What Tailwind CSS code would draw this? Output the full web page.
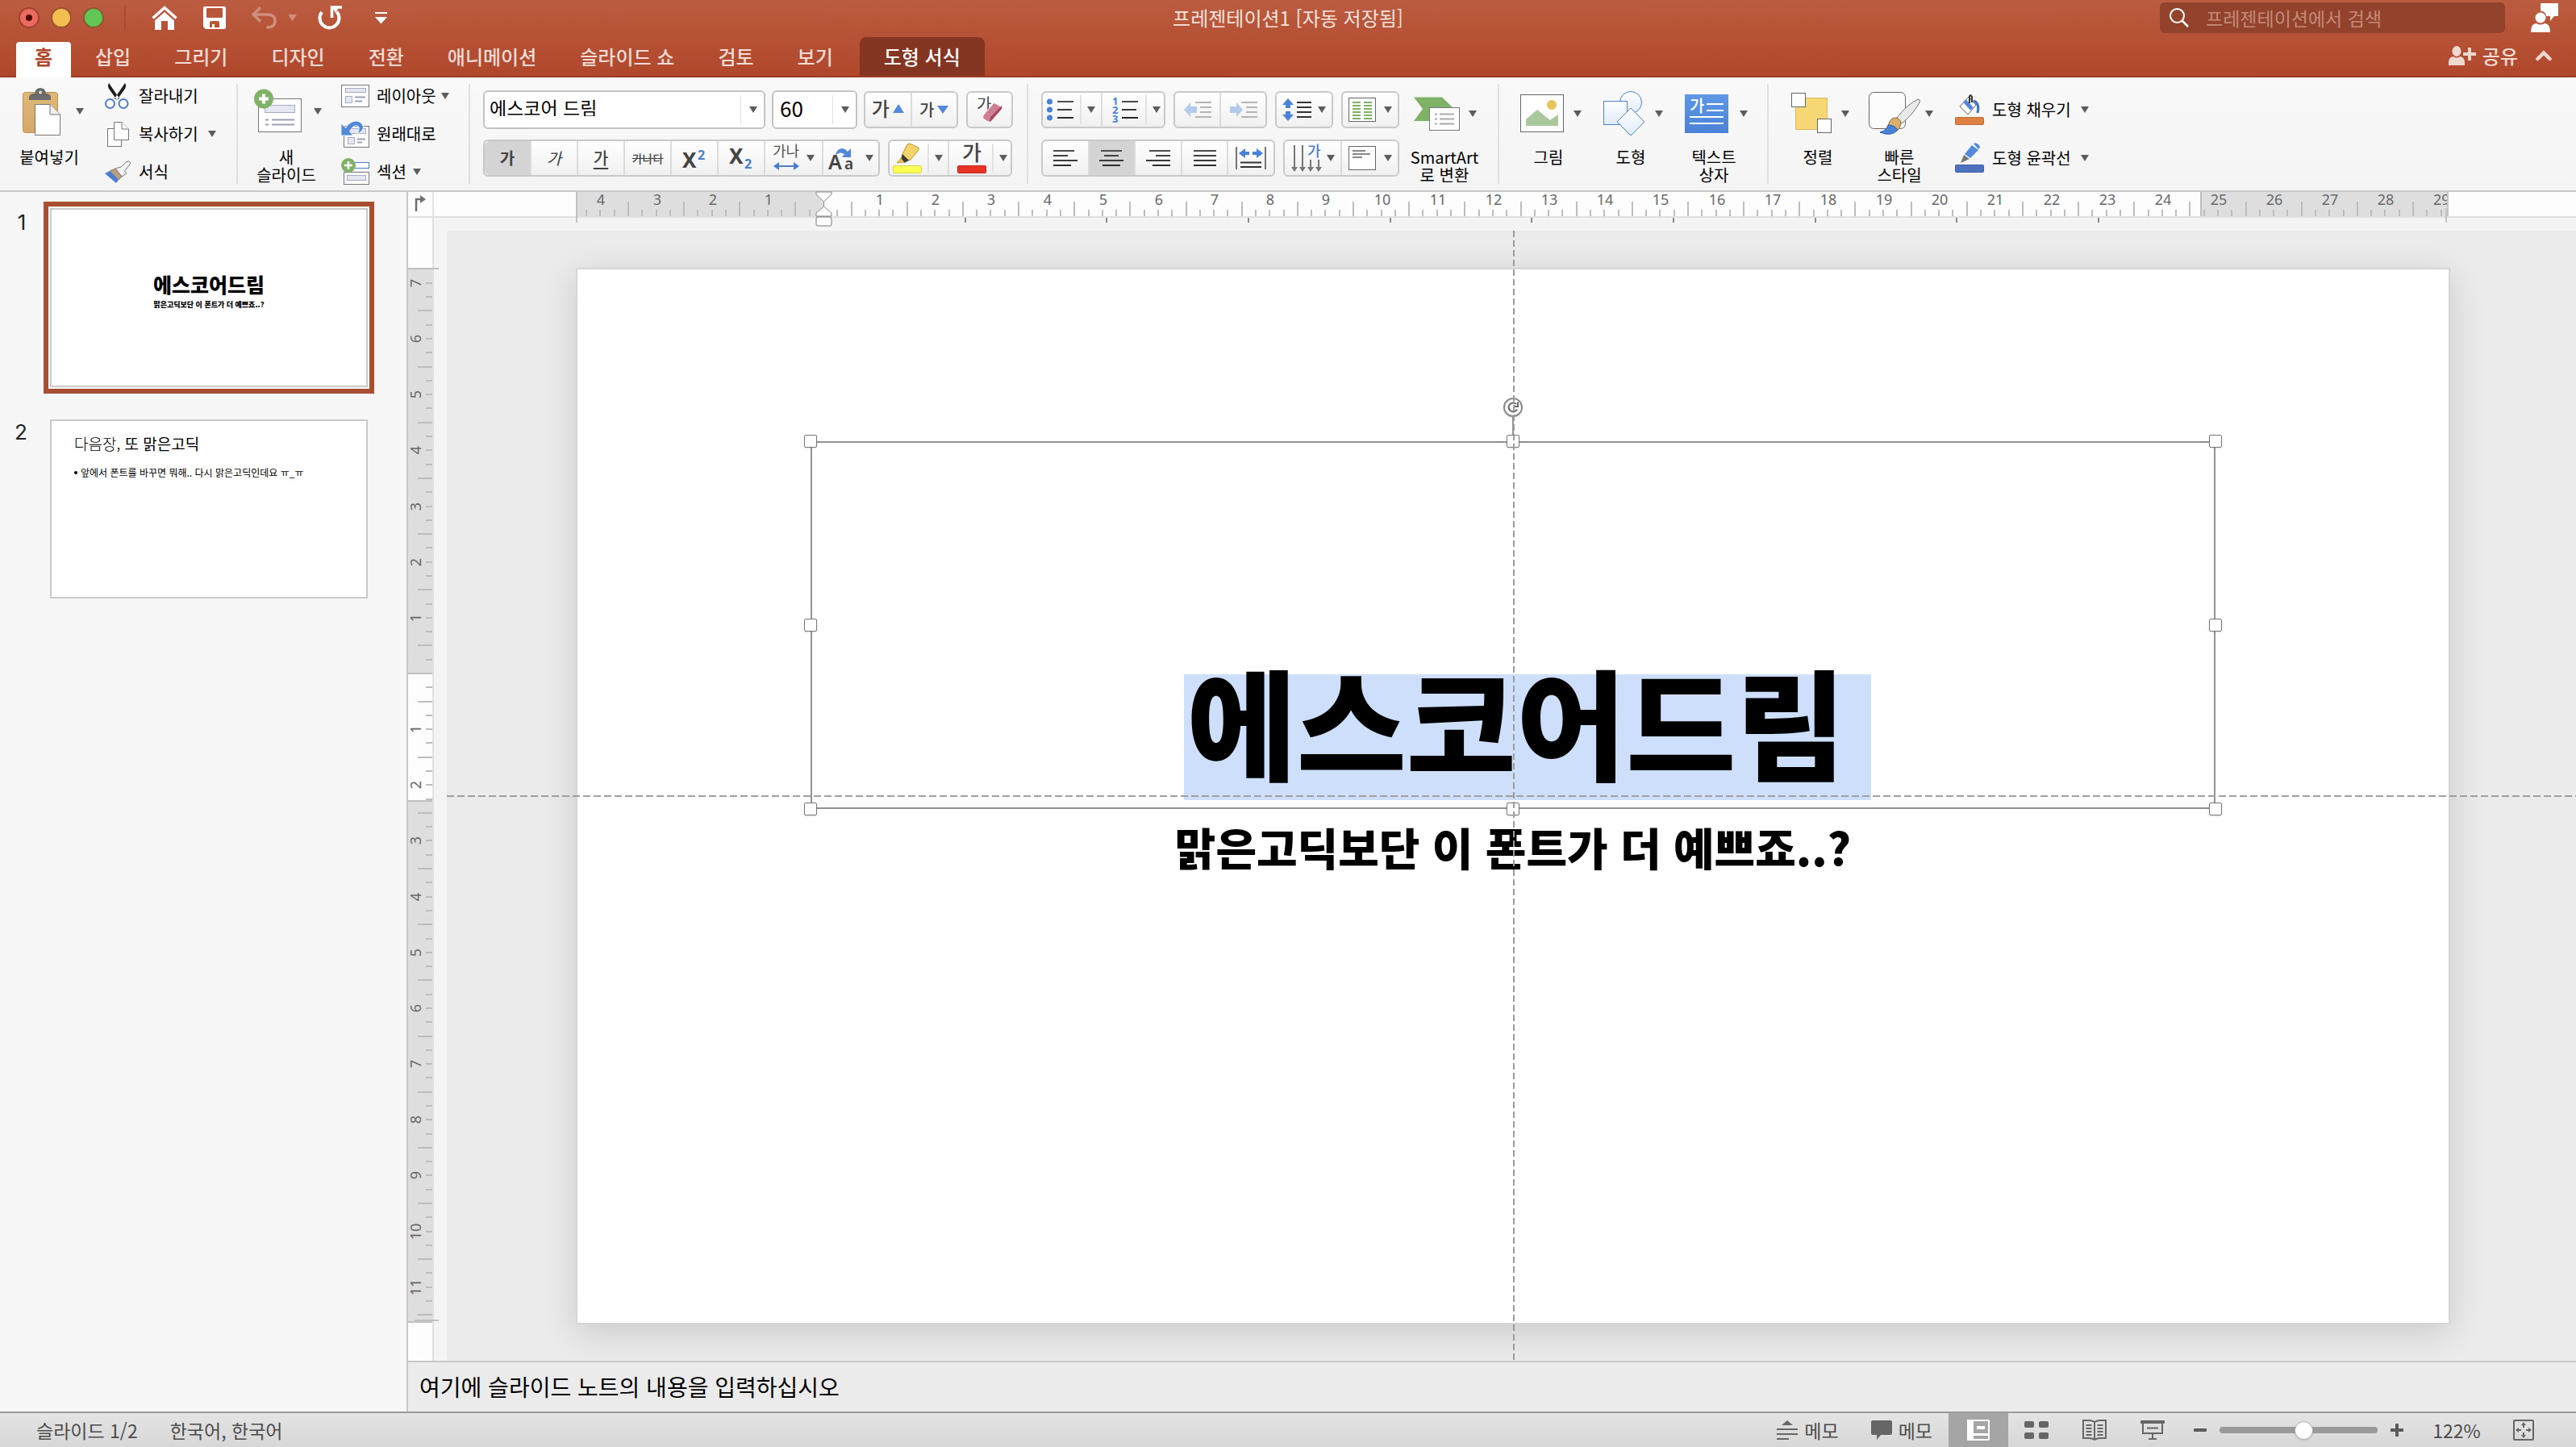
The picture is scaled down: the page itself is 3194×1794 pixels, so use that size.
<!DOCTYPE html>
<html lang="ko">
<head>
<meta charset="utf-8">
<title>프레젠테이션1 [자동 저장됨]</title>
<script src="https://cdn.jsdelivr.net/npm/@tailwindcss/browser@4"></script>
</head>
<body class="h-screen overflow-hidden flex flex-col bg-[#f4f4f4] text-black font-['Noto_Sans_CJK_KR',sans-serif] text-[20px] leading-[22px]">
<svg class="absolute size-0">
  <symbol id="caret" viewBox="0 0 10 8"><path d="M0 0H10L5 8Z" fill="#5c5c5c"/></symbol>
  <linearGradient id="gBlue" x1="0" y1="0" x2="0" y2="1"><stop offset="0" stop-color="#5f97e6"/><stop offset="1" stop-color="#4a82d8"/></linearGradient>
  <linearGradient id="gPale" x1="0" y1="0" x2="0" y2="1"><stop offset="0" stop-color="#fff"/><stop offset="1" stop-color="#e0ebfa"/></linearGradient>
  <linearGradient id="gTan" x1="0" y1="0" x2="0" y2="1"><stop offset="0" stop-color="#dfb878"/><stop offset="1" stop-color="#d3a869"/></linearGradient>
  <linearGradient id="gLine" gradientUnits="userSpaceOnUse" x1="0" y1="0" x2="0" y2="30"><stop offset="0" stop-color="#555"/><stop offset="1" stop-color="#222"/></linearGradient>
</svg>

<!-- Title bar and tabs -->
<header class="shrink-0 h-24 flex flex-col bg-linear-to-b from-[#bb5c40] to-[#b0472b] border-b-2 border-[#9a3c23]">
  <div class="grid grid-cols-[1fr_auto_1fr] items-center h-11">
    <div class="flex items-center h-11">
      <div class="flex gap-[14px] pl-[23px]">
        <button aria-label="닫기" class="size-[26px] rounded-full bg-[#ec6a5f] border-2 border-[#9f4230] flex items-center justify-center"><span class="size-2 rounded-full bg-[#4d0a04]"></span></button>
        <button aria-label="최소화" class="size-[26px] rounded-full bg-[#f4bf50] border-2 border-[#9f5330]"></button>
        <button aria-label="확대" class="size-[26px] rounded-full bg-[#61c654] border-2 border-[#8a5a30]"></button>
      </div>
      <div class="w-[2px] h-8 bg-[#a54c33] ml-[25px]"></div>
      <button aria-label="홈" class="ml-8"><svg width="32" height="30" viewBox="0 0 32 30"><path d="M1.500 15.500L16 2.500L30.500 15.500" fill="none" stroke="#fff" stroke-width="3.500"/><path d="M16 8L28 18.500V30H20V19H12V30H4V18.500Z" fill="#fff"/></svg></button>
      <button aria-label="저장" class="ml-8"><svg width="28" height="28" viewBox="0 0 28 28"><path d="M0 2Q0 0 2 0H26Q28 0 28 2V26Q28 28 26 28H3L0 25Z" fill="#fff"/><rect x="4" y="2" width="20" height="12" rx="1" fill="#b8563a"/><path d="M8 20Q8 18 10 18H18Q20 18 20 20V26H14V22H11V26H8Z" fill="#b8563a"/></svg></button>
      <button aria-label="실행 취소" class="ml-8 flex items-center gap-[14px]"><svg width="31" height="28" viewBox="0 0 31 28"><path d="M11 1.500L2 10L11 18.500M3 10H20Q29 10 29 18Q29 26 18.500 26" fill="none" stroke="#d08f7c" stroke-width="3.500"/></svg><svg width="11" height="8" viewBox="0 0 11 8"><path d="M0 0H11L5.500 8Z" fill="#d08f7c"/></svg></button>
      <button aria-label="다시 실행" class="ml-[26px]"><svg width="31" height="30" viewBox="0 0 31 30"><path d="M5 8A12 12 0 1 0 23.500 7.500" fill="none" stroke="#fff" stroke-width="4"/><path d="M17.500 15V2H30" fill="none" stroke="#fff" stroke-width="3.500"/><path d="M17 1H27L22 9Z" fill="#fff"/></svg></button>
      <button aria-label="도구 모음 사용자 지정" class="ml-10"><svg width="15" height="15" viewBox="0 0 15 15"><rect width="15" height="2" fill="#fff"/><path d="M0 6H15L7.500 14.500Z" fill="#fff"/></svg></button>
    </div>
    <div class="text-[24px] leading-8 text-[#f5e3de]">프레젠테이션1 [자동 저장됨]</div>
    <div class="flex justify-end items-center pr-[22px] gap-8">
      <label class="flex items-center w-[428px] h-[38px] rounded-md bg-[#93432c] pl-3 gap-[21px]">
        <svg width="24" height="24" viewBox="0 0 24 24" fill="none" stroke="#fff" stroke-width="2"><circle cx="9.500" cy="9.500" r="8.500"/><path d="M15.500 15.500L23 23" stroke-width="2.500"/></svg>
        <input type="text" aria-label="검색" placeholder="프레젠테이션에서 검색" class="flex-1 min-w-0 bg-transparent outline-none text-[23px] text-white placeholder:text-[#c48a79]">
      </label>
      <button aria-label="피드백"><svg width="34" height="36" viewBox="0 0 34 36" fill="#fff"><path d="M13 0H33Q34 0 34 1V15Q34 16 33 16H29L24 22V16H19Q18.500 10 12 9.500V1Q12 0 13 0Z"/><ellipse cx="12" cy="18" rx="6.500" ry="6.500"/><path d="M0 36Q0 25 7 25Q12 28 17 25Q24 25 24 36Z"/></svg></button>
    </div>
  </div>
  <div class="flex-1 flex justify-between">
    <nav class="flex items-end text-[24px] leading-8 text-[#f3dcd5]">
      <button class="ml-5 mr-[3px] h-[44px] -mb-[2px] pb-2 self-end w-[68px] rounded-t bg-white text-[#b0472b] font-bold">홈</button>
      <button class="h-12 px-[27px] font-medium">삽입</button>
      <button class="h-12 px-[27px] font-medium">그리기</button>
      <button class="h-12 px-[27px] font-medium">디자인</button>
      <button class="h-12 px-[27px] font-medium">전환</button>
      <button class="h-12 px-[27px] font-medium">애니메이션</button>
      <button class="h-12 px-[27px] font-medium">슬라이드 쇼</button>
      <button class="h-12 px-[27px] font-medium">검토</button>
      <button class="h-12 px-[27px] font-medium">보기</button>
      <button class="ml-[6px] h-12 px-[30px] rounded-t-lg bg-[#853622] text-white font-medium">도형 서식</button>
    </nav>
    <div class="flex items-center pr-[30px] text-[24px] text-[#f3dcd5] font-medium">
      <button class="flex items-center gap-2"><svg width="34" height="24" viewBox="0 0 34 24" fill="#efd8d0"><ellipse cx="10" cy="6.500" rx="5.500" ry="6.500"/><path d="M0 24V20Q0 14 6 13Q10 16 14 13Q20 14 20 20V24Z"/><path d="M24 2H28V8H34V12H28V18H24V12H18V8H24Z"/></svg>공유</button>
      <button aria-label="리본 축소" class="ml-[22px]"><svg width="20" height="14" viewBox="0 0 20 14" fill="none" stroke="#efd8d0" stroke-width="4.500" stroke-linecap="round"><path d="M2.500 11L10 3.500L17.500 11"/></svg></button>
    </div>
  </div>
</header>

<!-- Ribbon -->
<div class="shrink-0 h-[142px] flex bg-linear-to-b from-[#f9f9f9] to-[#f4f4f4] border-b-2 border-[#c8c8c8]">
  <!-- Clipboard -->
  <div class="flex w-[293px] pl-6">
    <button class="flex flex-col w-[84px] mr-[22px] pt-3">
      <span class="flex items-center h-[60px] pl-1 gap-[18px]">
        <svg width="48" height="60" viewBox="0 0 48 60"><rect x=".5" y="6.500" width="43" height="50" rx="3" fill="url(#gTan)" stroke="#bf924f"/><path d="M8 13Q8 9 13 8H15Q16 1 22 1Q28 1 29 8H31Q35 9 35 13V16H8Z" fill="#6b6b6b"/><circle cx="22" cy="6.500" r="2" fill="#e8dcc8"/><path d="M15.500 21.500H34L46.500 34V59.500H15.500Z" fill="#fff" stroke="#777"/><path d="M34 21.500V34H46.500" fill="#f0f0f0" stroke="#777"/></svg>
        <svg width="10" height="8"><use href="#caret"/></svg>
      </span>
      <span class="pt-4 w-[74px]">붙여넣기</span>
    </button>
    <div class="flex flex-col flex-1">
      <button class="flex flex-1 items-center"><span class="w-[42px]"><svg width="30" height="32" viewBox="0 0 30 32"><path d="M5 0L18 19L15 21L5 7Q3 3 5 0ZM25 0L12 19L15 21L25 7Q27 3 25 0Z" fill="#1d1d1d"/><circle cx="6.500" cy="25.500" r="5.500" fill="#fff" stroke="#4a7fd0" stroke-width="2"/><circle cx="23" cy="25.500" r="5.500" fill="#fff" stroke="#4a7fd0" stroke-width="2"/></svg></span>잘라내기</button>
      <button class="flex flex-1 items-center"><span class="w-[42px] pl-[3px]"><svg width="27" height="31" viewBox="0 0 27 31" fill="#fff" stroke="#777"><rect x=".5" y="8.500" width="17" height="22"/><path d="M8.500 .5H18L26.500 9V22.500H8.500Z"/><path d="M18 .5V9H26.500"/></svg></span>복사하기<svg class="ml-3" width="10" height="8"><use href="#caret"/></svg></button>
      <button class="flex flex-1 items-center"><span class="w-[42px]"><svg width="32" height="28" viewBox="0 0 32 28"><path d="M20 8L27 1.500Q30 0 31.500 2Q32 4 30 6L24.500 13L27 16L21 20L13 10Z" fill="#f2f2f2" stroke="#777"/><path d="M13 10L21 20L17 24L6 13Z" fill="#b79f84" stroke="#7c6a55" stroke-width=".8"/><path d="M6 13L17 24L14 28L0 16Z" fill="#4a7fd0"/></svg></span>서식</button>
    </div>
  </div>
  <div class="w-[2px] my-2 bg-[#e0e0e0]"></div>
  <!-- Slides -->
  <div class="flex w-[286px] pl-5">
    <button class="flex flex-col w-[92px] mr-4 pt-3">
      <span class="flex items-center h-[60px] gap-[14px]">
        <svg width="60" height="56" viewBox="0 0 60 56"><rect x="5.500" y="12.500" width="53" height="41" fill="#fff" stroke="#777"/><rect x="13.500" y="20.500" width="37" height="9" fill="#e4e7ef" stroke="#a7adbd"/><path d="M14 38.500H18M22 38.500H50M14 44.500H18M22 44.500H50" stroke="#9aa1b3" stroke-width="2"/><circle cx="12" cy="12.500" r="12" fill="#7fb267"/><path d="M12 6.500V18.500M6 12.500H18" stroke="#fff" stroke-width="4"/></svg>
        <svg width="10" height="8"><use href="#caret"/></svg>
      </span>
      <span class="w-20 pt-4">새<br>슬라이드</span>
    </button>
    <div class="flex flex-col flex-1">
      <button class="flex flex-1 items-center"><span class="w-11"><svg width="35" height="28" viewBox="0 0 35 28" fill="#fff" stroke="#777"><rect x=".5" y=".5" width="34" height="27"/><rect x="5.500" y="4.500" width="25" height="5" fill="#e4e7ef" stroke="#a7adbd"/><rect x="5.500" y="14.500" width="8" height="8" fill="#e4e7ef" stroke="#a7adbd"/><path d="M17 15.500H30M17 20.500H26" stroke="#9aa1b3" stroke-width="2"/></svg></span>레이아웃<svg class="ml-[6px]" width="10" height="8"><use href="#caret"/></svg></button>
      <button class="flex flex-1 items-center"><span class="w-11"><svg width="35" height="33" viewBox="0 0 35 33"><rect x="3.500" y="6.500" width="31" height="26" fill="#fff" stroke="#777"/><rect x="8.500" y="9.500" width="22" height="6" fill="#e4e7ef" stroke="#a7adbd"/><rect x="8.500" y="20.500" width="8" height="8" fill="#e4e7ef" stroke="#a7adbd"/><path d="M20 22.500H30M20 26.500H26" stroke="#9aa1b3" stroke-width="2"/><path d="M0 3V18H15L10.500 13Q14 6 19 5.500Q25 7 20 16Q28 12 27.500 7Q25 0 18 0Q10 1 5.500 8.500Z" fill="#5289db" stroke="#fff" stroke-width=".8"/></svg></span>원래대로</button>
      <button class="flex flex-1 items-center"><span class="w-11"><svg width="35" height="33" viewBox="0 0 35 33"><rect x="16.500" y="5.500" width="18" height="7" fill="#fff" stroke="#4a7fd0"/><rect x="3.500" y="17.500" width="31" height="15" fill="#fff" stroke="#777"/><rect x="7.500" y="21.500" width="23" height="6" fill="#e4e7ef" stroke="#a7adbd"/><circle cx="9" cy="9" r="9" fill="#7fb267"/><path d="M9 4V14M4 9H14" stroke="#fff" stroke-width="2.500"/></svg></span>섹션<svg class="ml-2" width="10" height="8"><use href="#caret"/></svg></button>
    </div>
  </div>
  <div class="w-[2px] my-2 bg-[#e0e0e0]"></div>
  <!-- Font -->
  <div class="flex flex-col w-[690px] pl-4 pt-4 gap-3 shrink-0">
    <div class="flex items-center h-12">
      <span class="relative w-[350px] h-12 rounded-md border-2 border-[#c4c4c4] bg-white">
        <select aria-label="글꼴" class="appearance-none w-full h-full pl-[6px] pb-[6px] bg-transparent text-[23px]"><option>에스코어 드림</option></select>
        <span class="absolute right-7 inset-y-1 w-px bg-[#e2e2e2]"></span><svg class="absolute right-2 top-[18px] pointer-events-none" width="10" height="8"><use href="#caret"/></svg>
      </span>
      <span class="relative w-[106px] h-12 ml-2 rounded-md border-2 border-[#c4c4c4] bg-white">
        <select aria-label="글꼴 크기" class="appearance-none w-full h-full pl-2 pb-1 bg-transparent text-[26px]"><option>60</option></select>
        <span class="absolute right-7 inset-y-1 w-px bg-[#e2e2e2]"></span><svg class="absolute right-2 top-[18px] pointer-events-none" width="10" height="8"><use href="#caret"/></svg>
      </span>
      <span class="flex w-[117px] h-[46px] ml-2 rounded-md border-2 border-[#c9c9c9] bg-linear-to-b from-white to-[#f0f0f0] divide-x-2 divide-[#dcdcdc] text-[#444]">
        <button class="flex-1 flex items-center justify-center gap-1 pb-1 text-[24px] font-medium">가<svg width="14" height="11"><path d="M7 0L14 11H0Z" fill="#5289db"/></svg></button>
        <button class="flex-1 flex items-center justify-center gap-1 pb-px text-[20px] font-medium">가<svg width="14" height="10"><path d="M0 0H14L7 10Z" fill="#5289db"/></svg></button>
      </span>
      <button aria-label="모든 서식 지우기" class="flex justify-center items-center w-[58px] h-[46px] ml-[10px] rounded-md border-2 border-[#c9c9c9] bg-linear-to-b from-white to-[#f0f0f0] text-[#444]"><svg class="overflow-visible" width="32" height="34" viewBox="0 0 32 34"><text x="0" y="18" font-size="20" fill="#444">가</text><path d="M8 24L20 10Q21 8 23 9L30 13Q31 14 30 16L18 31Q16 33 14 32L8 28Q7 26 8 24Z" fill="#cf7f95" stroke="#fff" stroke-width="1"/><path d="M16 32L17 26L31 12V16L18 31Z" fill="#a8465f"/></svg></button>
    </div>
    <div class="flex items-center h-12">
      <span class="flex w-[492px] h-[46px] rounded-md border-2 border-[#c9c9c9] bg-linear-to-b from-white to-[#f0f0f0] divide-x-2 divide-[#dcdcdc] text-[#444]">
        <button class="w-[58px] rounded-l-md bg-[#d4d4d4] font-bold">가</button>
        <button class="w-[58px] italic">가</button>
        <button class="w-[58px]"><span class="underline underline-offset-4 decoration-2 font-medium">가</span></button>
        <button class="w-[58px] text-[14px] line-through font-medium">가나다</button>
        <button aria-label="위 첨자" class="w-[58px]"><svg width="54" height="42" viewBox="0 0 54 42" class="overflow-visible font-['Noto_Sans',sans-serif] font-bold"><text x="13" y="33" font-size="26" fill="#444">X</text><text x="32" y="23" font-size="16" fill="#4a7fd0">2</text></svg></button>
        <button aria-label="아래 첨자" class="w-[58px]"><svg width="54" height="42" viewBox="0 0 54 42" class="overflow-visible font-['Noto_Sans',sans-serif] font-bold"><text x="13" y="28" font-size="26" fill="#444">X</text><text x="32" y="34" font-size="16" fill="#4a7fd0">2</text></svg></button>
        <button aria-label="문자 간격" class="w-[72px] flex items-center justify-center gap-2"><svg class="overflow-visible" width="34" height="40" viewBox="0 0 34 40"><text x="0" y="18" font-size="18" fill="#555">가나</text><path d="M6 30H28" stroke="#4a7fd0" stroke-width="2"/><path d="M1 30L8 25V35ZM33 30L26 25V35Z" fill="#4a7fd0"/></svg><svg width="10" height="8"><use href="#caret"/></svg></button>
        <button aria-label="대/소문자 바꾸기" class="flex-1 flex items-center justify-center gap-3"><svg width="34" height="40" viewBox="0 0 34 40" class="overflow-visible font-['Noto_Sans',sans-serif] font-semibold"><text x="0" y="34" font-size="25" fill="#444">A</text><text x="20" y="34" font-size="19" fill="#444">a</text><path d="M9 17Q10 8 18 8Q22 9 24 12L28 8V19H17L20 15Q14 11 9 17Z" fill="#5289db"/></svg><svg width="10" height="8"><use href="#caret"/></svg></button>
      </span>
      <span class="flex w-[154px] h-[46px] ml-[10px] rounded-md border-2 border-[#c9c9c9] bg-linear-to-b from-white to-[#f0f0f0] divide-x-2 divide-[#dcdcdc]">
        <button aria-label="텍스트 강조 색" class="w-[74px] flex items-center gap-[7px] pl-1"><svg width="36" height="38" viewBox="0 0 36 38"><path d="M18 2L21 1L32 6V9L21 22L11 16Z" fill="#f5d36b" stroke="#b59130"/><path d="M12 14L20 22L14 25L10 20Z" fill="#3a3a3a"/><path d="M10 19L14 24L5 25Z" fill="#f0c24f" stroke="#b59130" stroke-width=".8"/><rect x=".5" y="28.500" width="35" height="9" rx="1" fill="#fdfd54" stroke="#d8d84a"/></svg><span class="w-[2px] h-9 bg-[#e2e2e2]"></span><svg width="10" height="8"><use href="#caret"/></svg></button>
        <button aria-label="글꼴 색" class="flex-1 flex items-center gap-[7px] pl-[10px]"><svg class="overflow-visible" width="36" height="38" viewBox="0 0 36 38"><text x="6" y="22" font-size="26" font-weight="500" fill="#444">가</text><rect x=".5" y="28.500" width="35" height="9" rx="1" fill="#e93323" stroke="#b8281b"/></svg><span class="w-[2px] h-9 bg-[#e2e2e2]"></span><svg width="10" height="8"><use href="#caret"/></svg></button>
      </span>
    </div>
  </div>
  <div class="w-[2px] my-2 bg-[#e0e0e0]"></div>
  <!-- Paragraph -->
  <div class="flex w-[582px] pl-4 shrink-0">
    <div class="flex flex-col w-[444px] pt-4 gap-3">
      <div class="flex items-center h-12 gap-[10px]">
        <span class="flex w-[154px] h-[46px] rounded-md border-2 border-[#c9c9c9] bg-linear-to-b from-white to-[#f0f0f0] divide-x-2 divide-[#dcdcdc]">
          <button aria-label="글머리 기호" class="w-[74px] flex items-center pl-[5px] gap-[7px]"><svg width="34" height="28" viewBox="0 0 34 28"><g fill="#4a82d8"><circle cx="3.500" cy="4" r="3.500"/><circle cx="3.500" cy="14" r="3.500"/><circle cx="3.500" cy="24" r="3.500"/></g><path d="M13 4H33M13 14H31M13 24H33" stroke="url(#gLine)" stroke-width="2"/></svg><span class="w-[2px] h-9 bg-[#e2e2e2]"></span><svg width="10" height="8"><use href="#caret"/></svg></button>
          <button aria-label="번호 매기기" class="flex-1 flex items-center pl-3 gap-[7px]"><svg width="34" height="34" viewBox="0 0 34 34" class="overflow-visible font-['Noto_Sans',sans-serif] font-bold"><g fill="#4a82d8" font-size="13"><text x="0" y="11">1</text><text x="0" y="22">2</text><text x="0" y="33">3</text></g><path d="M12 7H32M12 17H30M12 27H32" stroke="url(#gLine)" stroke-width="2"/></svg><span class="w-[2px] h-9 bg-[#e2e2e2]"></span><svg width="10" height="8"><use href="#caret"/></svg></button>
        </span>
        <span class="flex w-[116px] h-[46px] rounded-md border-2 border-[#c9c9c9] bg-linear-to-b from-white to-[#f0f0f0] divide-x-2 divide-[#dcdcdc]">
          <button aria-label="내어쓰기" class="flex-1 flex items-center justify-center"><svg width="34" height="22" viewBox="0 0 34 22"><path d="M0 11L8 2V7H16V15H8V20Z" fill="#b5cbed"/><path d="M14 2H34M20 8H34M20 14H34M14 20H34" stroke="#b5b5b5" stroke-width="2"/></svg></button>
          <button aria-label="들여쓰기" class="flex-1 flex items-center justify-center"><svg width="34" height="22" viewBox="0 0 34 22"><path d="M16 11L8 2V7H0V15H8V20Z" fill="#b5cbed"/><path d="M14 2H34M20 8H34M20 14H34M14 20H34" stroke="#b5b5b5" stroke-width="2"/></svg></button>
        </span>
        <button aria-label="줄 간격" class="flex items-center justify-center gap-2 w-[72px] h-[46px] rounded-md border-2 border-[#c9c9c9] bg-linear-to-b from-white to-[#f0f0f0]"><svg width="36" height="28" viewBox="0 0 36 28"><path d="M7 0L14 8H10V12H4V8H0ZM7 28L14 20H10V16H4V20H0Z" fill="#4a82d8"/><path d="M18 5H36M18 11H36M18 17H36M18 23H36" stroke="#333" stroke-width="2"/></svg><svg width="10" height="8"><use href="#caret"/></svg></button>
        <button aria-label="열" class="flex items-center justify-center gap-[10px] w-[72px] h-[46px] rounded-md border-2 border-[#c9c9c9] bg-linear-to-b from-white to-[#f0f0f0]"><svg width="34" height="30" viewBox="0 0 34 30"><rect x=".5" y=".5" width="33" height="29" fill="#fff" stroke="#666"/><path d="M5 6H15M5 10H15M5 14H15M5 18H15M5 22H15M5 26H15M19 6H29M19 10H29M19 14H29M19 18H29M19 22H29M19 26H29" stroke="#7fb267" stroke-width="2"/></svg><svg width="10" height="8"><use href="#caret"/></svg></button>
      </div>
      <div class="flex items-center h-12 gap-[10px]">
        <span class="flex w-[290px] h-[46px] rounded-md border-2 border-[#c9c9c9] bg-linear-to-b from-white to-[#f0f0f0] divide-x-2 divide-[#dcdcdc]">
          <button aria-label="왼쪽 맞춤" class="flex-1 flex items-center justify-center"><svg width="30" height="28"><path d="M0 5H26M0 11H18M0 17H30M0 23H22" stroke="url(#gLine)" stroke-width="2"/></svg></button>
          <button aria-label="가운데 맞춤" class="flex-1 flex items-center justify-center bg-[#d4d4d4]"><svg width="30" height="28"><path d="M2 5H28M6 11H24M0 17H30M4 23H26" stroke="url(#gLine)" stroke-width="2"/></svg></button>
          <button aria-label="오른쪽 맞춤" class="flex-1 flex items-center justify-center"><svg width="30" height="28"><path d="M4 5H30M12 11H30M0 17H30M8 23H30" stroke="url(#gLine)" stroke-width="2"/></svg></button>
          <button aria-label="양쪽 맞춤" class="flex-1 flex items-center justify-center"><svg width="28" height="28"><path d="M0 5H28M0 11H28M0 17H28M0 23H28" stroke="url(#gLine)" stroke-width="2"/></svg></button>
          <button aria-label="균등 분할" class="flex-1 flex items-center justify-center"><svg width="38" height="28" viewBox="0 0 38 28"><path d="M1 0V28M37 0V28" stroke="#777" stroke-width="2"/><path d="M6 19.500H32M6 25H32" stroke="#333" stroke-width="2"/><path d="M4 8L12 2V6H17V10H12V14ZM34 8L26 2V6H21V10H26V14Z" fill="#4a82d8"/></svg></button>
        </span>
        <span class="flex w-[144px] h-[46px] rounded-md border-2 border-[#c9c9c9] bg-linear-to-b from-white to-[#f0f0f0] divide-x-2 divide-[#dcdcdc]">
          <button aria-label="텍스트 방향" class="flex-1 flex items-center justify-center gap-1"><svg class="overflow-visible" width="40" height="36" viewBox="0 0 40 36"><path d="M4 2V31M14 2V31M24 20V31M34 20V31" stroke="#777" stroke-width="2"/><path d="M0 29H8L4 35ZM10 29H18L14 35ZM20 29H28L24 35ZM30 29H38L34 35Z" fill="#777"/><text x="20" y="16" font-size="18" font-weight="500" fill="#4a7fd0">가</text></svg><svg width="10" height="8"><use href="#caret"/></svg></button>
          <button aria-label="텍스트 맞춤" class="flex-1 flex items-center justify-center gap-[10px]"><svg width="34" height="30" viewBox="0 0 34 30"><rect x=".5" y=".5" width="33" height="29" fill="#fff" stroke="#666"/><path d="M5 6H21M5 10H27M5 14H17" stroke="#888" stroke-width="2"/></svg><svg width="10" height="8"><use href="#caret"/></svg></button>
        </span>
      </div>
    </div>
    <button class="flex flex-col w-[100px] ml-2 pt-3">
      <span class="flex items-center h-[66px] pl-[10px] gap-[10px]"><svg width="58" height="42" viewBox="0 0 58 42"><path d="M0 .5H35L50 15L35 30H0L11 15Z" fill="#7fb267"/><rect x="19.500" y="13.500" width="37" height="28" fill="#fff" stroke="#777"/><path d="M26 21.500H29M32 21.500H50M26 27.500H29M32 27.500H50M26 33.500H29M32 33.500H50" stroke="#aaa" stroke-width="2"/></svg><svg width="10" height="8"><use href="#caret"/></svg></span>
      <span class="w-[96px] text-center pt-[10px]">SmartArt<br>로 변환</span>
    </button>
  </div>
  <div class="w-[2px] my-2 bg-[#e0e0e0]"></div>
  <!-- Insert -->
  <div class="flex w-[332px] pl-[26px] shrink-0">
    <button class="flex flex-col w-[103px] pt-3">
      <span class="flex items-center h-[66px] gap-3"><svg width="54" height="48" viewBox="0 0 54 48"><rect x=".5" y=".5" width="53" height="46" fill="#fff" stroke="#666"/><path d="M7 39V31L21 19L37 32L47 25V39Z" fill="#a9c99c"/><circle cx="39" cy="13" r="6" fill="#e8c45c"/></svg><svg width="10" height="8"><use href="#caret"/></svg></span>
      <span class="w-[70px] pt-[10px]">그림</span>
    </button>
    <button class="flex flex-col w-[101px] pt-3">
      <span class="flex items-center h-[66px] gap-3"><svg width="52" height="56" viewBox="0 0 52 56" fill="url(#gPale)" stroke="#4a82d8"><circle cx="34" cy="14" r="13.500"/><rect x=".5" y="12.500" width="29" height="29"/><path d="M34 21L51 38L34 55L17 38Z"/></svg><svg width="10" height="8"><use href="#caret"/></svg></span>
      <span class="w-[68px] pt-[10px]">도형</span>
    </button>
    <button class="flex flex-col w-[84px] pt-3">
      <span class="flex items-center h-[66px] gap-[14px]"><svg class="overflow-visible" width="54" height="48" viewBox="0 0 54 48"><rect width="54" height="48" fill="url(#gBlue)"/><text x="6" y="22" font-size="20" font-weight="500" fill="#fff">가</text><path d="M27 12H48M27 20H48M6 28H48M6 36H48" stroke="#fff" stroke-width="2"/></svg><svg width="10" height="8"><use href="#caret"/></svg></span>
      <span class="w-[72px] pt-[10px]">텍스트<br>상자</span>
    </button>
  </div>
  <div class="w-[2px] my-2 bg-[#e0e0e0]"></div>
  <!-- Arrange and styles -->
  <div class="flex pl-7 shrink-0">
    <button class="flex flex-col w-[96px] pt-3">
      <span class="flex items-center h-[66px] gap-3"><svg width="50" height="52" viewBox="0 0 50 52"><rect x="5.500" y="6.500" width="39" height="39" fill="#f7d774" stroke="#dcb95a"/><rect x=".5" y=".5" width="17" height="17" fill="#fff" stroke="#666"/><rect x="32.500" y="32.500" width="17" height="17" fill="#fff" stroke="#666"/></svg><svg width="10" height="8"><use href="#caret"/></svg></span>
      <span class="w-[66px] pt-[10px]">정렬</span>
    </button>
    <button class="flex flex-col w-[96px] pt-3">
      <span class="flex items-center h-[66px] gap-[6px]"><svg width="64" height="56" viewBox="0 0 64 56"><rect x=".5" y="1.500" width="45" height="45" rx="6" fill="#fcfcfc" stroke="#666"/><path d="M34 34Q48 16 61 10Q65 10 62 16Q54 30 41 40Z" fill="#e8e8e8" stroke="#777"/><path d="M24 44Q26 32 35 33Q43 37 38 46L34 50Z" fill="#dbb06c" stroke="#8d6a34"/><path d="M14 51Q22 49 24 42Q32 42 36 48Q28 57 14 51Z" fill="#4a82d8" stroke="#2b5cab"/></svg><svg width="10" height="8"><use href="#caret"/></svg></span>
      <span class="w-[76px] pt-[10px]">빠른<br>스타일</span>
    </button>
    <div class="flex flex-col pt-4 gap-3 pl-[11px]">
      <button class="flex items-center h-12"><svg width="36" height="40" viewBox="0 0 36 40"><path d="M6 16L17 4L26 14L16 26Z" fill="#fff" stroke="#666"/><path d="M12 9L21 19" stroke="#5289db" stroke-width="5"/><path d="M18 12V4Q19 0 21 4V11" fill="none" stroke="#333" stroke-width="2"/><path d="M23 9Q31 12 28 24" fill="none" stroke="#3f74c8" stroke-width="3"/><rect x=".5" y="29.500" width="35" height="9" rx="1" fill="#dd8142" stroke="#c06e36"/></svg><span class="ml-[10px] mr-3">도형 채우기</span><svg width="10" height="8"><use href="#caret"/></svg></button>
      <button class="flex items-center h-12"><svg width="36" height="38" viewBox="0 0 36 38"><path d="M21 3L29 9L19 19L12 14Z" fill="#5289db"/><path d="M23 1Q26 -1 30 3Q32 6 29 8Z" fill="#5289db"/><path d="M11 15L18 20L7 25Z" fill="#777"/><rect x=".5" y="27.500" width="35" height="9" rx="1" fill="#4e72be" stroke="#3f5fa4"/></svg><span class="ml-[10px] mr-3">도형 윤곽선</span><svg width="10" height="8"><use href="#caret"/></svg></button>
    </div>
  </div>
</div>

<!-- Workspace -->
<main class="flex-1 min-h-0 flex">
  <aside class="w-[506px] shrink-0 bg-[#f7f7f7] border-r-2 border-[#c8c8c8] pt-3">
    <div class="flex">
      <span class="w-[54px] shrink-0 text-center text-[26px] leading-8 pt-[10px] text-[#222] font-['Inter',sans-serif]">1</span>
      <div class="w-[410px] h-[238px] border-6 border-[#a84e32] p-[2px]">
        <div class="h-full border-2 border-[#cacaca] bg-white flex flex-col items-center pt-[76px] font-black">
          <div class="text-[25px] leading-8">에스코어드림</div>
          <div class="text-[9px] leading-5">맑은고딕보단 이 폰트가 더 예쁘죠..?</div>
        </div>
      </div>
    </div>
    <div class="flex mt-8">
      <span class="w-[52px] shrink-0 text-center text-[26px] leading-8 text-[#222] font-['Inter',sans-serif]">2</span>
      <div class="ml-[10px] w-[394px] h-[222px] border-2 border-[#cacaca] bg-white pl-7 pt-4">
        <div class="text-[19px] leading-6"><span class="font-light">다음장,</span> 또 맑은고딕</div>
        <div class="text-[12px] leading-5 mt-[14px] flex items-center gap-1"><span class="size-1 rounded-full bg-black"></span>앞에서 폰트를 바꾸면 뭐해.. 다시 맑은고딕인데요 ㅠ_ㅠ</div>
      </div>
    </div>
  </aside>

  <section class="flex-1 min-w-0 flex flex-col">
    <!-- Horizontal ruler -->
    <div class="flex h-8 shrink-0 border-b-2 border-[#e0e0e0] bg-[#fdfdfd]">
      <div class="w-8 shrink-0 border-r-2 border-[#e4e4e4]"><svg width="30" height="30" viewBox="0 0 30 30"><path d="M10 24V9H16" fill="none" stroke="#707070" stroke-width="2.500"/><path d="M15 4L22 9L15 14Z" fill="#707070"/></svg></div>
      <svg id="hruler" class="flex-1 min-w-0 h-[46px] overflow-visible relative font-['Noto_Sans',sans-serif] text-[18px]"></svg>
    </div>
    <div class="flex flex-1 min-h-0">
      <!-- Vertical ruler -->
      <div class="w-8 shrink-0 border-r-2 border-[#e0e0e0] bg-[#fdfdfd]"><svg id="vruler" class="w-10 h-full overflow-visible font-['Noto_Sans',sans-serif] text-[18px]"></svg></div>
      <div class="flex-1 flex pl-4 pt-4">
        <div class="flex-1 flex bg-[#ebebeb] pl-40 pr-[156px] pt-[46px] pb-[45px] overflow-hidden">
          <div class="relative flex-1 bg-white border-2 border-[#d6d6d6] shadow-[0_10px_40px_rgba(0,0,0,0.14)]">
            <!-- Title placeholder with selection frame -->
            <div class="absolute inset-x-[12.45%] top-[16.3%] h-[34.9%] border-2 border-[#929292] flex items-end justify-center">
              <h1 class="h-[156px] leading-[112px] mb-[9px] pl-1 pr-8 -mr-9 bg-[#cddffa] text-[148px] font-black whitespace-nowrap">에스코어드림</h1>
              <span class="absolute left-1/2 -translate-x-1/2 -top-[32px] w-[2px] h-8 bg-[#929292]"></span>
              <span class="absolute left-1/2 -translate-x-1/2 -top-[56px] size-6 rounded-full bg-white border-2 border-[#8a8a8a] shadow-sm flex items-center justify-center"><svg width="16" height="16" viewBox="0 0 16 16" fill="none" stroke="#666" stroke-width="2"><path d="M13 10.500A5.500 5.500 0 1 1 12 4"/><path d="M8.500 7H14V1.500"/></svg></span>
              <span class="absolute -left-[10px] -top-[10px] size-4 rounded-xs bg-white border border-[#777] shadow-sm"></span>
              <span class="absolute left-1/2 -translate-x-1/2 -top-[10px] size-4 rounded-xs bg-white border border-[#777] shadow-sm"></span>
              <span class="absolute -right-[10px] -top-[10px] size-4 rounded-xs bg-white border border-[#777] shadow-sm"></span>
              <span class="absolute -left-[10px] top-1/2 -translate-y-1/2 size-4 rounded-xs bg-white border border-[#777] shadow-sm"></span>
              <span class="absolute -right-[10px] top-1/2 -translate-y-1/2 size-4 rounded-xs bg-white border border-[#777] shadow-sm"></span>
              <span class="absolute -left-[10px] -bottom-[10px] size-4 rounded-xs bg-white border border-[#777] shadow-sm"></span>
              <span class="absolute left-1/2 -translate-x-1/2 -bottom-[10px] size-4 rounded-xs bg-white border border-[#777] shadow-sm"></span>
              <span class="absolute -right-[10px] -bottom-[10px] size-4 rounded-xs bg-white border border-[#777] shadow-sm"></span>
            </div>
            <p class="absolute inset-x-[12.5%] top-[52%] text-center text-[55px] leading-[72px] font-black">맑은고딕보단 이 폰트가 더 예쁘죠..?</p>
            <!-- Guides -->
            <span class="absolute left-1/2 -top-[48px] -bottom-[47px] w-[2px] bg-[repeating-linear-gradient(to_bottom,#9c9c9c_0_8px,transparent_8px_12px)]"></span>
            <span class="absolute top-1/2 -mt-px -left-[162px] -right-[158px] h-[2px] bg-[repeating-linear-gradient(to_right,#a0a0a0_0_9px,transparent_9px_13px)]"></span>
          </div>
        </div>
      </div>
    </div>
    <div class="shrink-0 h-[63px] border-t-2 border-[#c8c8c8] bg-[#ebebeb] flex items-center">
      <input type="text" aria-label="슬라이드 노트" value="여기에 슬라이드 노트의 내용을 입력하십시오" class="flex-1 h-full pl-[14px] pb-[2px] bg-transparent outline-none text-[28px]">
    </div>
  </section>
</main>

<!-- Status bar -->
<footer class="shrink-0 h-11 flex items-center border-t-2 border-[#999] bg-linear-to-b from-[#e4e4e4] to-[#d7d7d7] text-[23px] text-[#4c4c4c] pl-[45px]">
  <span>슬라이드 1/2</span>
  <button class="ml-10">한국어, 한국어</button>
  <div class="flex-1"></div>
  <button class="flex items-center gap-2"><svg width="26" height="24" viewBox="0 0 26 24" fill="#666"><path d="M13 0L20 6H6Z"/><path d="M0 10H26V12H0ZM0 16H26V18H0ZM0 22H15V24H0Z"/></svg>메모</button>
  <button class="flex items-center gap-2 ml-10"><svg width="26" height="24" viewBox="0 0 26 24" fill="#666"><path d="M2 0H24Q26 0 26 2V16Q26 18 24 18H12L7 24V18H2Q0 18 0 16V2Q0 0 2 0Z"/></svg>메모</button>
  <button aria-label="기본 보기" class="ml-5 w-[74px] self-stretch bg-[#a5a5a5] flex items-center justify-center"><svg width="28" height="26" viewBox="0 0 28 26"><rect x="1" y="1" width="26" height="24" rx="1" fill="none" stroke="#fff" stroke-width="2"/><path d="M0 0H8V26H0ZM8 17H28V20H8ZM12 8H22V12H12Z" fill="#fff"/></svg></button>
  <button aria-label="여러 슬라이드" class="w-[70px] flex justify-center"><svg width="30" height="22" fill="#666"><rect width="12" height="8" rx="2"/><rect x="18" width="12" height="8" rx="2"/><rect y="14" width="12" height="8" rx="2"/><rect x="18" y="14" width="12" height="8" rx="2"/></svg></button>
  <button aria-label="읽기용 보기" class="w-[74px] flex justify-center"><svg width="30" height="26" viewBox="0 0 30 26" fill="none" stroke="#666" stroke-width="2"><path d="M15 3Q12 1 8 1H1V23H8Q12 23 15 25Q18 23 22 23H29V1H22Q18 1 15 3V25M4.500 7H11.500M4.500 11H11.500M4.500 15H11.500M4.500 19H11.500M18.500 7H25.500M18.500 11H25.500M18.500 15H25.500M18.500 19H25.500"/></svg></button>
  <button aria-label="슬라이드 쇼" class="w-[70px] flex justify-center"><svg width="30" height="24" viewBox="0 0 30 24" fill="none" stroke="#666" stroke-width="2"><rect width="30" height="4" rx="1" fill="#666" stroke="none"/><path d="M3 4V16H27V4M8 9.500H22M15 16V23M10 23H20"/></svg></button>
  <button aria-label="축소" class="ml-4"><svg width="16" height="16"><rect y="6" width="16" height="4" rx="1" fill="#5c5c5c"/></svg></button>
  <input type="range" aria-label="확대/축소 비율" min="0" max="100" value="54" class="appearance-none mx-4 w-[196px] h-2 rounded-full bg-[#9a9a9a] [&::-webkit-slider-thumb]:appearance-none [&::-webkit-slider-thumb]:size-[23px] [&::-webkit-slider-thumb]:rounded-full [&::-webkit-slider-thumb]:bg-white [&::-webkit-slider-thumb]:border [&::-webkit-slider-thumb]:border-[#b0b0b0] [&::-webkit-slider-thumb]:shadow">
  <button aria-label="확대"><svg width="16" height="16"><path d="M6 0H10V6H16V10H10V16H6V10H0V6H6Z" fill="#5c5c5c"/></svg></button>
  <button class="ml-[35px] w-[62px]">122%</button>
  <button aria-label="창에 맞춤" class="ml-[39px] mr-[52px]"><svg width="26" height="26" viewBox="0 0 26 26" fill="#666"><rect x="1" y="1" width="24" height="24" rx="1" fill="none" stroke="#666" stroke-width="2"/><path d="M13 3L16 7H14V10H12V7H10ZM13 23L16 19H14V16H12V19H10ZM3 13L7 10V12H10V14H7V16ZM23 13L19 10V12H16V14H19V16Z"/></svg></button>
</footer>

<script>
// Ruler geometry: one centimetre at the current zoom, origin at the text box's inner edge.
const CM = 69.16;
const ns = 'http://www.w3.org/2000/svg';
function add(svg, tag, attrs, text) {
  const el = document.createElementNS(ns, tag);
  for (const k in attrs) el.setAttribute(k, attrs[k]);
  if (text !== undefined) el.textContent = text;
  svg.appendChild(el);
}
function rect(svg, x, y, w, h, fill) { add(svg, 'rect', { x, y, width: w, height: h, fill }); }

const h = document.getElementById('hruler');
const hZero = 483, hStart = 178, hInner = 2190, hEnd = 2498;
rect(h, hStart, 0, hZero - hStart, 30, '#dedede');
rect(h, hInner, 0, hEnd - hInner, 30, '#dedede');
for (let q = -17; q <= 117; q++) {
  const x = Math.round(hZero + q * CM / 4);
  if (q === 0 || x <= hStart || x >= hEnd) continue;
  const half = Math.abs(q % 4) === 2;
  rect(h, x - 1, half ? 12 : 22, 2, half ? 18 : 8, '#bdbdbd');
  if (q % 4 === 0 && q < 116) add(h, 'text', { x: x + 1, y: 16, 'text-anchor': 'middle', fill: '#686868' }, Math.abs(q / 4));
}
add(h, 'text', { x: hEnd - 19, y: 16, fill: '#686868' }, '29');
rect(h, hEnd - 2, 0, 14, 30, '#fdfdfd');
rect(h, hEnd - 2, 0, 2, 30, '#c4c4c4');
rect(h, hEnd - 4, 20, 2, 18, '#c4c4c4');
rect(h, hStart - 2, 0, 2, 38, '#c0c0c0');
rect(h, hInner, 0, 2, 30, '#c0c0c0');
for (let t = 1; t <= 9; t++) rect(h, Math.round(hZero + t * CM * 2.54) - 1, 32, 2, 6, '#8a8a8a');
add(h, 'path', { d: 'M474 0H493V3L483.5 12L474 3Z', fill: '#fff', stroke: '#888' });
add(h, 'path', { d: 'M483.5 12V18M474 30V26L483.5 18L493 26V30Z', fill: '#fff', stroke: '#888' });
add(h, 'rect', { x: 474, y: 31, width: 19, height: 11, rx: 2, fill: '#fff', stroke: '#777' });

const v = document.getElementById('vruler');
const vZero = 565, vStart = 64, vInner = 722, vEnd = 1368;
rect(v, 0, vStart, 30, vZero - vStart, '#dedede');
rect(v, 0, vInner, 30, vEnd - vInner, '#dedede');
for (let q = -28; q <= 46; q++) {
  const y = Math.round(vZero + q * CM / 4);
  if (q === 0) continue;
  const half = Math.abs(q % 4) === 2;
  rect(v, half ? 12 : 22, y - 1, half ? 18 : 8, 2, '#bdbdbd');
  if (q % 4 === 0) add(v, 'text', { transform: 'translate(16 ' + y + ') rotate(-90)', 'text-anchor': 'middle', fill: '#686868' }, Math.abs(q / 4));
}
rect(v, 0, vStart - 2, 38, 2, '#c0c0c0');
rect(v, 0, vZero - 1, 30, 2, '#c0c0c0');
rect(v, 0, vInner, 30, 2, '#c0c0c0');
rect(v, 0, vEnd, 30, 2, '#c0c0c0');
rect(v, 8, vEnd - 2, 30, 2, '#c0c0c0');
</script>
</body>
</html>
